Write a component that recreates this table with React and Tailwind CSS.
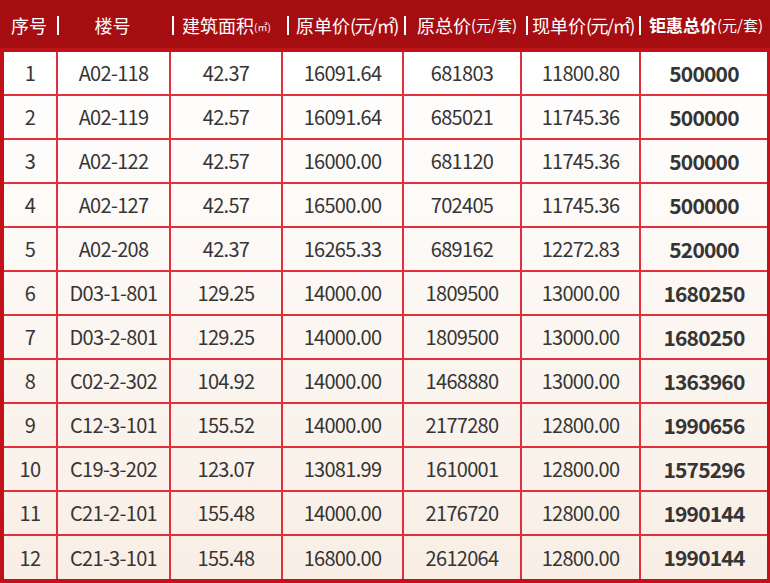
import React from "react";

const rows = [
  ["1", "A02-118", "42.37", "16091.64", "681803", "11800.80", "500000"],
  ["2", "A02-119", "42.57", "16091.64", "685021", "11745.36", "500000"],
  ["3", "A02-122", "42.57", "16000.00", "681120", "11745.36", "500000"],
  ["4", "A02-127", "42.57", "16500.00", "702405", "11745.36", "500000"],
  ["5", "A02-208", "42.37", "16265.33", "689162", "12272.83", "520000"],
  ["6", "D03-1-801", "129.25", "14000.00", "1809500", "13000.00", "1680250"],
  ["7", "D03-2-801", "129.25", "14000.00", "1809500", "13000.00", "1680250"],
  ["8", "C02-2-302", "104.92", "14000.00", "1468880", "13000.00", "1363960"],
  ["9", "C12-3-101", "155.52", "14000.00", "2177280", "12800.00", "1990656"],
  ["10", "C19-3-202", "123.07", "13081.99", "1610001", "12800.00", "1575296"],
  ["11", "C21-2-101", "155.48", "14000.00", "2176720", "12800.00", "1990144"],
  ["12", "C21-3-101", "155.48", "16800.00", "2612064", "12800.00", "1990144"],
];

const font = { fontFamily: '"Noto Sans CJK SC", "Noto Sans", sans-serif' };

function Sep() {
  return <div className="absolute left-0 top-[15px] h-[19px] w-[2px] bg-white" />;
}

export default function App() {
  return (
    <div
      className="w-[770px] h-[583px] bg-[#a60d11] flex flex-col overflow-hidden"
      style={font}
    >
      <div className="h-[48px] flex text-white text-[18px] leading-none shrink-0 pt-[1px]">
        <div className="relative w-[57px] flex items-center justify-center pl-[1px]">
          序号
        </div>
        <div className="relative w-[115px] flex items-center justify-center pr-[4px]">
          <Sep />
          楼号
        </div>
        <div className="relative w-[115px] flex items-center pl-[10px]">
          <Sep />
          <span>建筑面积</span>
          <span className="text-[10px] mt-[4px]">(㎡)</span>
        </div>
        <div className="relative w-[117px] flex items-center pl-[9px]">
          <Sep />
          <span>原单价</span>
          <span className="tracking-[-1.5px]">(元/㎡)</span>
        </div>
        <div className="relative w-[122px] flex items-center pl-[13px]">
          <Sep />
          <span>原总价</span>
          <span className="text-[15px]">(元/套)</span>
        </div>
        <div className="relative w-[113px] flex items-center pl-[6px]">
          <Sep />
          <span>现单价</span>
          <span className="tracking-[-1.5px]">(元/㎡)</span>
        </div>
        <div className="relative flex-1 flex items-center pl-[10px]">
          <Sep />
          <span className="font-bold text-[17px]">钜惠总价</span>
          <span className="text-[15px]">(元/套)</span>
        </div>
      </div>
      <div className="flex-1 bg-[#c1121a] pt-[4px] pl-[4px] pr-[3px] pb-[4px]">
        <div className="h-full bg-gradient-to-b from-white to-[#f8eee5] grid grid-cols-[54px_113px_112px_121px_118px_119px_126px] text-[#353535] text-[20px] leading-none">
          {rows.map((r, ri) =>
            r.map((c, ci) => {
              const last = ri === rows.length - 1;
              const lastCol = ci === 6;
              return (
                <div
                  key={ri + "-" + ci}
                  className={
                    "flex items-center justify-center border-[#e1303c] " +
                    (last ? "h-[43px] " : "h-[44px] border-b-2 ") +
                    (lastCol
                      ? "font-bold text-[21px] tracking-[-0.8px] "
                      : "border-r-2 tracking-[-0.7px] ")
                  }
                >
                  {c}
                </div>
              );
            })
          )}
        </div>
      </div>
    </div>
  );
}
